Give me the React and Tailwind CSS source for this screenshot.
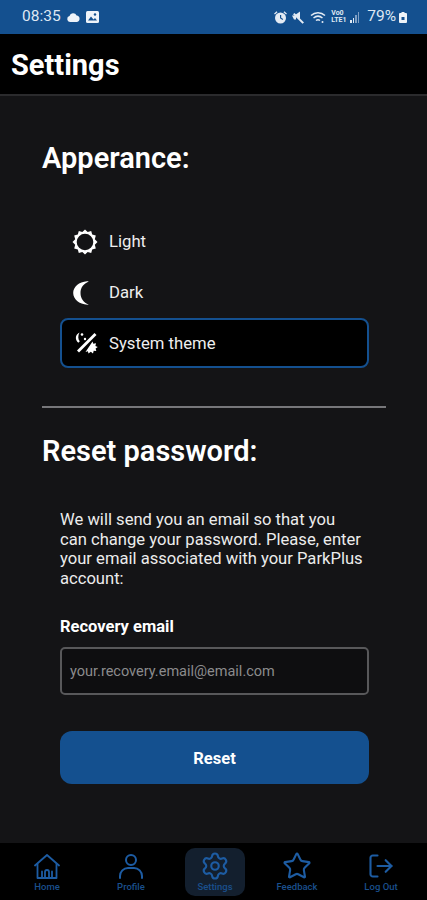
import { Settings, Star, LogOut } from "lucide-react";

function HouseIcon() {
  return (
    <svg width="26" height="25" viewBox="0 0 26 25" fill="none" stroke="currentColor" strokeWidth="1.800" strokeLinejoin="round" strokeLinecap="round">
      <path d="M1 11.500 13 1l12 10.500" />
      <path d="M3.500 10v14h19V10" />
      <path d="M8 24v-6.500M18 24v-6.500" />
      <path d="M11 24v-6a2 2 0 0 1 4 0v6" />
    </svg>
  );
}

function ProfileIcon() {
  return (
    <svg width="26" height="26" viewBox="0 0 26 26" fill="none" stroke="currentColor" strokeWidth="2" strokeLinecap="round">
      <circle cx="13" cy="7" r="5" />
      <path d="M2 25v-2a8 8 0 0 1 8-8h6a8 8 0 0 1 8 8v2" />
    </svg>
  );
}

const navItems = [
  { label: "Home", icon: <HouseIcon />, margin: "ml-[17px]" },
  { label: "Profile", icon: <ProfileIcon />, margin: "ml-[24px]" },
  { label: "Settings", icon: <Settings size={30} strokeWidth={1.700} />, margin: "ml-[24px]", active: true },
  { label: "Feedback", icon: <Star size={30} strokeWidth={1.700} />, margin: "ml-[22px]" },
  { label: "Log Out", icon: <LogOut size={28} strokeWidth={1.800} />, margin: "ml-[24px]" },
];

function SunIcon() {
  return (
    <svg width="26" height="26" viewBox="0 0 26 26" fill="white">
      <path fillRule="evenodd" d="M13 0.500l2.700 2.600 3.500-1 1 3.500 3.600 1-1 3.600L25.500 13l-2.700 2.800 1 3.600-3.600 1-1 3.500-3.500-1L13 25.500l-2.700-2.600-3.500 1-1-3.500-3.600-1 1-3.600L.5 13l2.700-2.800-1-3.600 3.600-1 1-3.500 3.500 1z M13 4.700a8.300 8.300 0 1 0 0 16.600 8.300 8.300 0 0 0 0-16.600z" />
    </svg>
  );
}

function MoonIcon() {
  return (
    <svg width="16" height="24" viewBox="0 0 16 24" fill="white">
      <path d="M14 .2C6 .8.2 5.800.2 12S6 23.200 14.500 23.800c.5 0 1 0 1.300-.1C10.500 21.500 7.500 17.500 7.500 12S10.500 2.500 15.800.4C15.200.2 14.600.2 14 .2z" />
    </svg>
  );
}

function SystemThemeIcon() {
  return (
    <svg width="24" height="24" viewBox="0 0 24 24" fill="white">
      <path d="M22.500 4 5 21.500l-2-2L20.500 2z" />
      <path d="M5.500 1.500C2.500 3 1 6 2.500 9.500c.5 1 1 1.700 1.800 2.300l1.500-1.500C4 8.500 3.700 5 5.500 1.500z" />
      <circle cx="8" cy="3.500" r="1.300" />
      <circle cx="11" cy="8" r="1.200" />
      <path d="M18.500 10.500l.8 2.300 2.700-.5-.6 2.600 2.400 1.100-2.200 1.500.7 2.500-2.600-.2-.7 2.700-2.200-1.700-2.300 1.800-.6-2.400-2.400.7z" />
    </svg>
  );
}

function AlarmIcon() {
  return (
    <svg width="13" height="13" viewBox="0 0 13 13" fill="#e4ebf4">
      <path fillRule="evenodd" d="M6.500 1.500a5.500 5.500 0 1 0 0 11 5.500 5.500 0 0 0 0-11zM6 4h1.200v2.700l2 1.200-.6 1L6 7.300z" />
      <path d="M0 2.700 2.500.3l1 .9L1 3.600zM13 2.700 10.500.3l-1 .9L12 3.600z" />
    </svg>
  );
}

function MuteIcon() {
  return (
    <svg width="13" height="13" viewBox="0 0 13 13" fill="#e4ebf4">
      <path d="M3 4 8 .5v7.500z" />
      <path d="M0 4.500h4v4H2z" />
      <path d="M2.500 2l9.500 9.500-1.500 1.300L1 3.300z" />
    </svg>
  );
}

function WifiIcon() {
  return (
    <svg width="16" height="13" viewBox="0 0 16 13" fill="none" stroke="#e4ebf4" strokeWidth="1.500">
      <path d="M1 4.500C5 .8 11 .8 15 4.500" />
      <path d="M3.500 7C6.500 4.500 9.500 4.500 12.500 7" />
      <path d="M6 9.500c1.300-1 2.700-1 4 0" />
      <circle cx="12.500" cy="11" r="1" fill="#e4ebf4" stroke="none" />
    </svg>
  );
}

function ImageIcon() {
  return (
    <svg width="13" height="12" viewBox="0 0 13 12">
      <rect width="13" height="12" rx="1.500" fill="#eef3f9" />
      <circle cx="9" cy="3.500" r="1.200" fill="#14508f" />
      <path d="M2 9.500 5 5.500l2.500 3 1.500-1.500 2 2.500z" fill="#14508f" />
    </svg>
  );
}

function CloudIcon() {
  return (
    <svg width="13" height="9" viewBox="0 0 13 9" fill="#eef3f9">
      <path d="M3 9a3 3 0 0 1-.5-5.900A3.800 3.800 0 0 1 9.600 2.500 3.300 3.300 0 0 1 10 9z" />
    </svg>
  );
}

function BatteryIcon() {
  return (
    <svg width="8" height="11" viewBox="0 0 8 11">
      <path d="M2.500 0h3v1H7a1 1 0 0 1 1 1v8a1 1 0 0 1-1 1H1a1 1 0 0 1-1-1V2a1 1 0 0 1 1-1h1.500z" fill="#eef3f9" />
      <rect x="2.500" y="5" width="3" height="3" fill="#14508f" />
    </svg>
  );
}

function StatusBar() {
  return (
    <div className="flex h-[34px] items-center justify-between bg-[#14508f] pl-[22px] pr-[20px] text-[#dfe8f3]">
      <div className="flex items-center gap-[6px]">
        <span className="text-[15.500px] leading-none">08:35</span>
        <CloudIcon />
        <ImageIcon />
      </div>
      <div className="flex items-center">
        <AlarmIcon />
        <span className="ml-[5px]"><MuteIcon /></span>
        <span className="ml-[5px]"><WifiIcon /></span>
        <span className="ml-[5px] flex w-[17px] flex-col text-[7px] font-bold leading-[7px]">
          <span>Vo0</span>
          <span>LTE1</span>
        </span>
        <div className="ml-[2px] flex items-end gap-[1px]">
          <span className="h-[3px] w-[1.500px] bg-[#dfe8f3]" />
          <span className="h-[5px] w-[1.500px] bg-[#dfe8f3]" />
          <span className="h-[8px] w-[1.500px] bg-[#7f9fc4]" />
          <span className="h-[11px] w-[1.500px] bg-[#7f9fc4]" />
        </div>
        <span className="ml-[8px] text-[15.500px] leading-none">79%</span>
        <span className="ml-[3px]"><BatteryIcon /></span>
      </div>
    </div>
  );
}

function ThemeRow({ icon, label, selected }) {
  return (
    <div className={`flex items-center rounded-[8px] border-2 pl-[10px] ${selected ? "h-[50px] border-[#14508f] bg-black" : "h-[51px] border-transparent"}`}>
      <div className="flex w-[26px] justify-start">{icon}</div>
      <span className={`ml-[11px] text-[16.700px] text-[#eeeeee] ${selected ? "pt-[2px]" : ""}`}>{label}</span>
    </div>
  );
}

export default function App() {
  return (
    <div className="flex h-[900px] w-[427px] flex-col overflow-hidden bg-[#141416] font-['Roboto',sans-serif] text-white">
      <StatusBar />

      <div className="flex h-[62px] items-center border-b-2 border-[#2b2b2d] bg-black px-[11px] pt-[3px]">
        <h1 className="text-[29px] font-bold">Settings</h1>
      </div>

      <main className="flex-1 pl-[42px] pr-[41px]">
        <h2 className="mt-[44px] text-[29px] font-semibold leading-[36px]">Apperance:</h2>

        <div className="mt-[40px] ml-[18px] mr-[17px] flex flex-col">
          <ThemeRow icon={<SunIcon />} label="Light" />
          <ThemeRow icon={<span className="ml-[1px]"><MoonIcon /></span>} label="Dark" />
          <ThemeRow icon={<span className="ml-[2px]"><SystemThemeIcon /></span>} label="System theme" selected />
        </div>

        <div className="mt-[38px] h-[2px] bg-[#77777a]" />

        <h2 className="mt-[25px] text-[29px] font-semibold leading-[36px]">Reset password:</h2>

        <div className="ml-[18px] mr-[17px]">
          <p className="mt-[41px] text-[16.600px] leading-[19.500px] text-[#ececec]">
            We will send you an email so that you<br />
            can change your password. Please, enter<br />
            your email associated with your ParkPlus<br />
            account:
          </p>
          <label className="mt-[29px] block text-[16.500px] font-bold leading-[20px]">Recovery email</label>
          <div className="mt-[10px] flex h-[48px] items-center rounded-[5px] border-2 border-[#58585a] bg-[#0e0e10] px-[8px] pt-[2px]">
            <span className="text-[14.500px] text-[#8b8b8d]">your.recovery.email@email.com</span>
          </div>
          <button className="mt-[36px] h-[53px] w-full rounded-[12px] bg-[#14508f] pt-[3px] text-[16.500px] font-bold text-white">Reset</button>
        </div>
      </main>

      <nav className="flex h-[57px] items-center bg-black">
        {navItems.map((item) => (
          <div key={item.label} className={`flex h-[48px] w-[60px] flex-col items-center justify-center rounded-[10px] text-[#1d5ca3] ${item.margin} ${item.active ? "bg-[#131f2e]" : ""}`}>
            <div className="flex h-[30px] items-center justify-center">{item.icon}</div>
            <span className="text-[9.500px] font-medium leading-[11px] text-[#1a4f8c]">{item.label}</span>
          </div>
        ))}
      </nav>
    </div>
  );
}
